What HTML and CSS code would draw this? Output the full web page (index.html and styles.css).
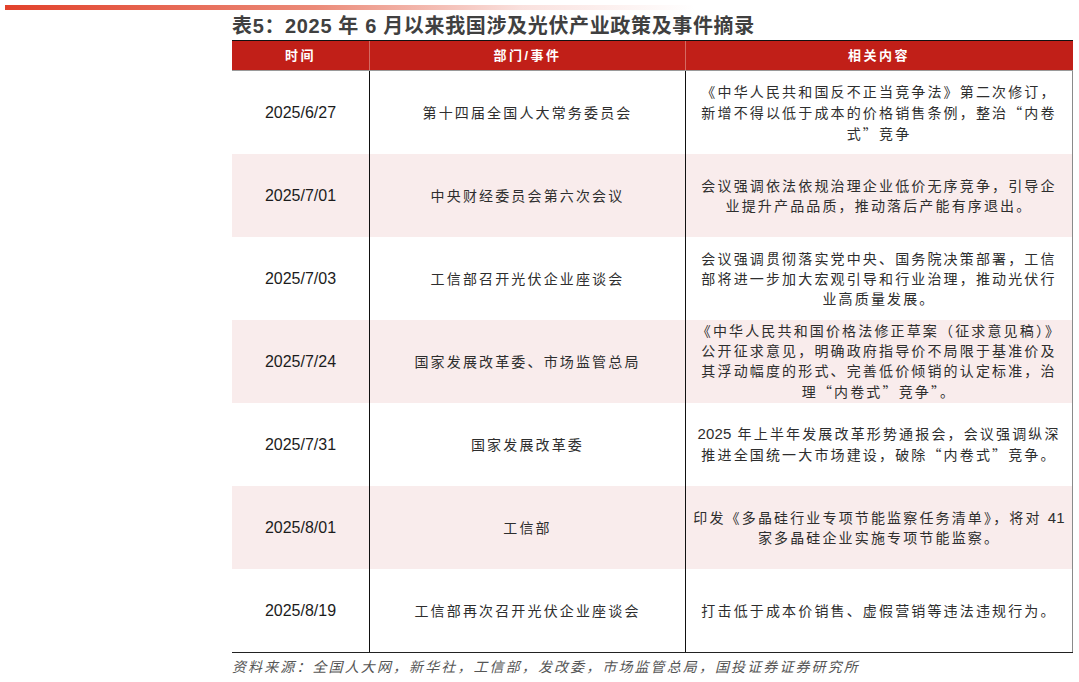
FILE: index.html
```html
<!DOCTYPE html>
<html lang="zh-CN">
<head>
<meta charset="utf-8">
<title>表5</title>
<link rel="stylesheet" href="styles.css">
</head>
<body>
<div class="topbar"></div>
<div class="wrap">
  <h1 class="title">表5：2025 年 6 月以来我国涉及光伏产业政策及事件摘录</h1>
  <div class="table">
    <div class="row head">
      <div class="cell">时间</div>
      <div class="cell">部门/事件</div>
      <div class="cell">相关内容</div>
    </div>
    <div class="row">
      <div class="cell date">2025/6/27</div>
      <div class="cell">第十四届全国人大常务委员会</div>
      <div class="cell"><div class="t">《中华人民共和国反不正当竞争法》第二次修订，<br>新增不得以低于成本的价格销售条例，整治<span class="q">“</span>内卷<br>式<span class="q">”</span>竞争</div></div>
    </div>
    <div class="row alt">
      <div class="cell date">2025/7/01</div>
      <div class="cell">中央财经委员会第六次会议</div>
      <div class="cell"><div class="t">会议强调依法依规治理企业低价无序竞争，引导企<br>业提升产品品质，推动落后产能有序退出。</div></div>
    </div>
    <div class="row">
      <div class="cell date">2025/7/03</div>
      <div class="cell">工信部召开光伏企业座谈会</div>
      <div class="cell"><div class="t">会议强调贯彻落实党中央、国务院决策部署，工信<br>部将进一步加大宏观引导和行业治理，推动光伏行<br>业高质量发展。</div></div>
    </div>
    <div class="row alt">
      <div class="cell date">2025/7/24</div>
      <div class="cell">国家发展改革委、市场监管总局</div>
      <div class="cell"><div class="t">《中华人民共和国价格法修正草案（征求意见稿）》<br>公开征求意见，明确政府指导价不局限于基准价及<br>其浮动幅度的形式、完善低价倾销的认定标准，治<br>理<span class="q">“</span>内卷式<span class="q">”</span>竞争<span class="q">”</span>。</div></div>
    </div>
    <div class="row">
      <div class="cell date">2025/7/31</div>
      <div class="cell">国家发展改革委</div>
      <div class="cell"><div class="t"><span class="n">2025</span> 年上半年发展改革形势通报会，会议强调纵深<br>推进全国统一大市场建设，破除<span class="q">“</span>内卷式<span class="q">”</span>竞争。</div></div>
    </div>
    <div class="row alt">
      <div class="cell date">2025/8/01</div>
      <div class="cell">工信部</div>
      <div class="cell"><div class="t">印发《多晶硅行业专项节能监察任务清单》，将对 <span class="n">41</span><br>家多晶硅企业实施专项节能监察。</div></div>
    </div>
    <div class="row last">
      <div class="cell date">2025/8/19</div>
      <div class="cell">工信部再次召开光伏企业座谈会</div>
      <div class="cell"><div class="t">打击低于成本价销售、虚假营销等违法违规行为。</div></div>
    </div>
  </div>
  <p class="source">资料来源：全国人大网，新华社，工信部，发改委，市场监管总局，国投证券证券研究所</p>
</div>
</body>
</html>
```

FILE: styles.css
```css
html, body {
  margin: 0;
  padding: 0;
  background: #ffffff;
}
body {
  font-family: "Liberation Sans", "Noto Sans CJK SC", sans-serif;
  color: #222;
}
.topbar {
  margin: 5px 0 0 5px;
  width: 690px;
  height: 5px;
  background: linear-gradient(to right, #e2412b 0%, #eb8a78 45%, rgba(246, 205, 200, 0.6) 75%, rgba(255, 255, 255, 0) 100%);
}
.wrap {
  margin-left: 232px;
  width: 841px;
}
.title {
  margin: 3px 0 0 0;
  height: 27px;
  line-height: 27px;
  font-size: 20px;
  font-weight: 700;
  color: #404040;
  letter-spacing: 0.65px;
  white-space: nowrap;
}
.table {
  display: flex;
  flex-direction: column;
}
.row {
  display: grid;
  grid-template-columns: 138px 316px 387px;
  height: 83px;
}
.row.alt {
  background: #f9ecec;
}
.cell {
  display: flex;
  align-items: center;
  justify-content: center;
  text-align: center;
  font-size: 14px;
  line-height: 20px;
  letter-spacing: 2.15px;
  color: #2e2e2e;
  border-right: 1px solid #111;
  white-space: nowrap;
}
.cell:last-child {
  border-right: 1px solid #8a8a8a;
}
.t {
  text-align: center;
}
.q {
  font-family: "Noto Sans CJK SC", sans-serif;
}
.n {
  font-size: 15px;
  letter-spacing: 0.2px;
}
.cell.date {
  font-size: 16px;
  letter-spacing: 0;
  color: #1c1c1c;
}
.row.head {
  height: 31px;
  background: #c11f18;
  border-top: 1px solid #111;
  border-bottom: 1px solid #9a9a9a;
  box-sizing: border-box;
}
.row.head .cell {
  color: #ffffff;
  font-weight: 700;
  font-size: 13px;
  letter-spacing: 2.5px;
  border-right: 1px solid #d46a62;
}
.row.head .cell:last-child {
  border-right: 1px solid #c11f18;
}
.row.last {
  border-bottom: 1px solid #222;
  height: 84px;
  box-sizing: border-box;
}
.source {
  margin: 4px 0 0 0;
  font-size: 14px;
  line-height: 20px;
  font-style: italic;
  color: #555;
  letter-spacing: 2.1px;
  white-space: nowrap;
}
```
